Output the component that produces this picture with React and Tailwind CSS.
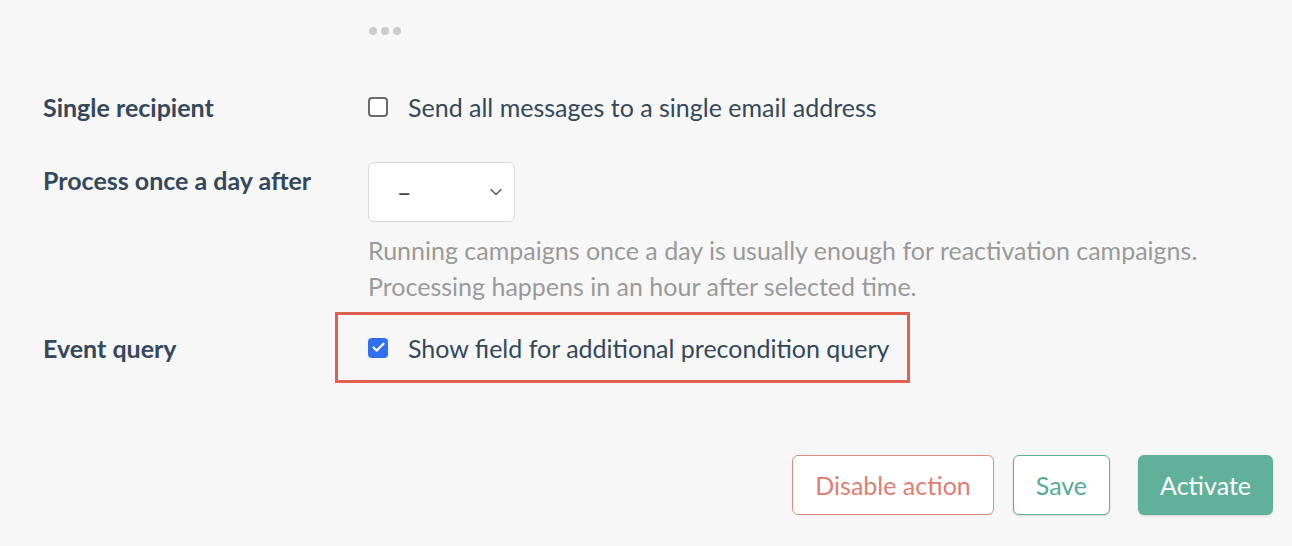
import { ChevronDown, Check } from "lucide-react";

function Row({ label, children, className = "" }) {
  return (
    <div className={`flex ${className}`}>
      <div className="w-[325px] shrink-0 font-bold text-[#34475b]">{label}</div>
      <div className="flex-1">{children}</div>
    </div>
  );
}

export default function App() {
  return (
    <div
      className="min-h-[546px] bg-[#f7f7f7] pl-[43px] pr-[19px] text-[25px] leading-[36px]"
      style={{ fontFamily: "Lato, 'Open Sans', sans-serif" }}
    >
      {/* collapsed more-indicator */}
      <div className="flex gap-[4px] pl-[326px] pt-[27px]">
        <span className="h-[8px] w-[8px] rounded-full bg-[#cccccc]" />
        <span className="h-[8px] w-[8px] rounded-full bg-[#cccccc]" />
        <span className="h-[8px] w-[8px] rounded-full bg-[#cccccc]" />
      </div>

      <Row label="Single recipient" className="mt-[54px]">
        <label className="flex items-center gap-[20px] text-[#34475b]">
          <span className="h-[20px] w-[20px] rounded-[4px] border-2 border-[#6b6b6b] bg-white" />
          Send all messages to a single email address
        </label>
      </Row>

      <Row label="Process once a day after" className="mt-[37px]">
        <div className="flex h-[60px] w-[147px] items-center justify-between rounded-[6px] border border-[#d9d9d9] bg-white pl-[28px] pr-[8px] text-[#444]">
          <span>–</span>
          <ChevronDown size={20} strokeWidth={1.5} className="text-[#555]" />
        </div>
        <p className="mt-[10px] text-[#9a9a9a]">
          Running campaigns once a day is usually enough for reactivation campaigns.
          <br />
          Processing happens in an hour after selected time.
        </p>
      </Row>

      <Row label="Event query" className="mt-[8px] items-center">
        <div className="-ml-[33px] inline-flex h-[71px] items-center gap-[20px] border-[3px] border-[#e2604f] pl-[30px] pr-[17px] text-[#34475b]">
          <span className="flex h-[20px] w-[20px] items-center justify-center rounded-[4px] bg-[#2f6ff0]">
            <Check size={15} strokeWidth={3.5} className="text-white" />
          </span>
          Show field for additional precondition query
        </div>
      </Row>

      <div className="mt-[72px] flex justify-end gap-[19px] text-[25px]">
        <button className="h-[60px] rounded-[6px] border border-[#e08a80] bg-white px-[22px] text-[#e07d73]">
          Disable action
        </button>
        <button className="h-[60px] rounded-[6px] border border-[#5fb09a] bg-white px-[22px] text-[#56ab93] shadow-sm">
          Save
        </button>
        <button className="ml-[9px] h-[60px] rounded-[6px] bg-[#60b09a] px-[22px] text-white shadow-sm">
          Activate
        </button>
      </div>
    </div>
  );
}
